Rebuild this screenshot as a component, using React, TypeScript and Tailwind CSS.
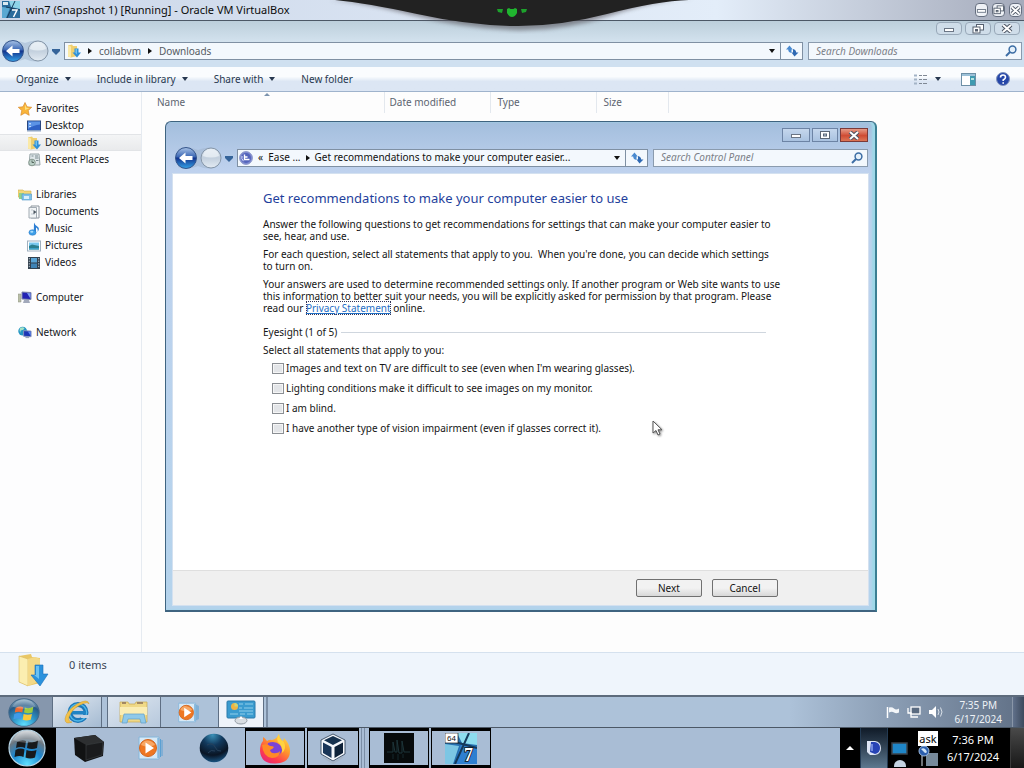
import React, { useState } from "react";

type IconProps = { className?: string };

const GUEST = "font-['Noto_Sans','Open_Sans',sans-serif]";

/* ---------- small glyphs ---------- */

function Caret({ className = "" }: IconProps) {
  return (
    <svg viewBox="0 0 6 4" className={`h-1 w-1.5 shrink-0 ${className}`} aria-hidden="true">
      <path d="M0 0h6L3 4z" fill="currentColor" />
    </svg>
  );
}

function RightArrow() {
  return (
    <svg viewBox="0 0 4 6" className="h-1.5 w-1 shrink-0" aria-hidden="true">
      <path d="M0 0l4 3-4 3z" fill="#111" />
    </svg>
  );
}

function NavIcons({ id }: { id: string }) {
  return (
    <svg viewBox="0 0 60 24" className="h-6 w-[60px] shrink-0" aria-hidden="true">
      <defs>
        <linearGradient id={`${id}-b`} x1="0" y1="0" x2="0" y2="1">
          <stop offset="0" stopColor="#a9c3e6" />
          <stop offset=".45" stopColor="#3a66b4" />
          <stop offset=".5" stopColor="#12328c" />
          <stop offset="1" stopColor="#35a3e8" />
        </linearGradient>
        <linearGradient id={`${id}-g`} x1="0" y1="0" x2="0" y2="1">
          <stop offset="0" stopColor="#dfe8f1" />
          <stop offset=".5" stopColor="#c3d0de" />
          <stop offset="1" stopColor="#e3ebf3" />
        </linearGradient>
      </defs>
      <path d="M4 3Q12-1 24 4Q36-1 44 4L44 20Q36 25 24 20Q12 25 4 21z" fill="#9fb4cc" opacity=".5" />
      <circle cx="12" cy="12" r="10.5" fill={`url(#${id}-b)`} stroke="#34558c" />
      <path d="M5 12l6.500-5.500v3.500h7v4h-7v3.500z" fill="#fff" />
      <circle cx="37" cy="12" r="10" fill={`url(#${id}-g)`} stroke="#8596a8" />
      <path d="M29 10a8 7 0 0 1 16 0q-8 3-16 0z" fill="#eef3f8" opacity=".7" />
      <path d="M51 10h8v2l-4 4-4-4z" fill="#35649a" />
    </svg>
  );
}

function RefreshIcon() {
  return (
    <svg viewBox="0 0 14 12" className="h-3 w-3.5" aria-hidden="true">
      <path d="M4.500 .5L1 4.500h2.200q0 3 3.300 3.500V4.500h1.300z" fill="#4a8ad0" />
      <path d="M9.500 11.500L13.500 7.500h-2.300Q11 4.500 8 4v3.500H6.500z" fill="#2f69b3" />
    </svg>
  );
}

function SearchIcon() {
  return (
    <svg viewBox="0 0 12 12" className="size-3 shrink-0" aria-hidden="true">
      <circle cx="7.500" cy="4.500" r="3.400" fill="#e4f0fa" stroke="#3d6ea5" strokeWidth="1.500" />
      <path d="M5 7L1 11" stroke="#3d6ea5" strokeWidth="2" />
    </svg>
  );
}

function MinGlyph() {
  return (
    <svg viewBox="0 0 12 8" className="h-2 w-3" aria-hidden="true">
      <rect x="1.500" y="3.500" width="9" height="3" fill="#fff" stroke="#6b7685" />
    </svg>
  );
}

function RestoreGlyph() {
  return (
    <svg viewBox="0 0 12 10" className="h-2.5 w-3" aria-hidden="true">
      <rect x="4.500" y=".5" width="7" height="5.500" fill="#fff" stroke="#56606f" />
      <rect x="1" y="3" width="7" height="6" fill="#fff" stroke="#56606f" />
      <rect x="3.500" y="5.500" width="2" height="1.500" fill="none" stroke="#56606f" />
    </svg>
  );
}

function MaxGlyph() {
  return (
    <svg viewBox="0 0 12 8" className="h-2 w-3" aria-hidden="true">
      <rect x="1.500" y=".5" width="9" height="7" fill="#fff" stroke="#5b6675" />
      <rect x="4.500" y="3" width="3" height="2" fill="#b9cbe2" stroke="#5b6675" />
    </svg>
  );
}

function CloseGlyph() {
  return (
    <svg viewBox="0 0 12 9" className="h-[9px] w-3" aria-hidden="true">
      <path d="M2 1l8 7M10 1L2 8" stroke="#4c5563" strokeWidth="4" />
      <path d="M2 1l8 7M10 1L2 8" stroke="#fff" strokeWidth="2" />
    </svg>
  );
}

/* ---------- navigation tree icons ---------- */

function StarIcon() {
  return (
    <svg viewBox="0 0 14 14" className="size-3.5" aria-hidden="true">
      <path d="M7 .5l2 4.300 4.700.5-3.500 3.200 1 4.800L7 10.900l-4.200 2.400 1-4.800L.3 5.300 5 4.800z" fill="#f9b53a" stroke="#d98a2b" strokeWidth=".7" />
      <path d="M7 2.500l1.400 3.200L12 6 7 8z" fill="#ffe07a" />
    </svg>
  );
}

function DesktopIcon() {
  return (
    <svg viewBox="0 0 14 12" className="h-3 w-3.5" aria-hidden="true">
      <rect x=".5" y="1" width="13" height="9.500" fill="#2f62c6" stroke="#28467f" />
      <path d="M1 1.500h12v3Q6 5 1 9z" fill="#5b93e6" />
      <path d="M2 3h2v1.500H2zM2 6h2v1H2z" fill="#b9d7ff" />
      <path d="M0 10h14v1.500H0z" fill="#8fa5c4" />
    </svg>
  );
}

function DownloadsIcon() {
  return (
    <svg viewBox="0 0 14 14" className="size-3.5 shrink-0" aria-hidden="true">
      <path d="M1 1.500l4-1 1 1.500h4v10l-6 1.500-3-1z" fill="#f0cf6e" />
      <path d="M1 1.500l3 1v11l-3-1z" fill="#fae9a7" />
      <path d="M7.500 4.500h4v4H14l-4 5-4.500-5h2z" fill="#2e8fd6" />
      <path d="M8.500 5h1.500v5.500l-2-2h.5z" fill="#6fc0ee" />
    </svg>
  );
}

function RecentIcon() {
  return (
    <svg viewBox="0 0 14 14" className="size-3.5" aria-hidden="true">
      <path d="M3 1h9l1 11H2z" fill="#dfe7ea" stroke="#98a5a8" />
      <path d="M8 3h3M8 5h3.500M4.500 3h2M9 7.500h2.500" stroke="#7b8b90" />
      <circle cx="5" cy="9.500" r="3.300" fill="#b9cfc6" stroke="#87988f" />
      <path d="M5 7.500v2h2" stroke="#56675f" fill="none" />
    </svg>
  );
}

function LibrariesIcon() {
  return (
    <svg viewBox="0 0 14 12" className="h-3 w-3.5" aria-hidden="true">
      <path d="M0 1h5l1 1h7v6H0z" fill="#f3d778" stroke="#cfae51" strokeWidth=".6" />
      <path d="M1 4h5v6H1z" fill="#8fd08c" />
      <path d="M4 5h9.500v6H4z" fill="#7fc2ea" stroke="#5398c7" strokeWidth=".6" />
      <path d="M6 7h5v3H6z" fill="#d8effb" />
    </svg>
  );
}

function DocumentsIcon() {
  return (
    <svg viewBox="0 0 14 14" className="size-3.5" aria-hidden="true">
      <path d="M4 1h8v12H4z" fill="#fbfcfd" stroke="#8b949d" />
      <path d="M2 2.500h7.500v10.500H2z" fill="#f1f4f6" stroke="#a2abb3" />
      <path d="M4 5h2M4 9h4" stroke="#c0c8cf" />
      <path d="M6.500 5l3 2-3 2.200z" fill="#4a5560" />
    </svg>
  );
}

function MusicIcon() {
  return (
    <svg viewBox="0 0 14 14" className="size-3.5" aria-hidden="true">
      <path d="M7 .5q1 3 4 4.500 2 2-.5 5 1-3-1.500-4.500v4.500H6.800z" fill="#2d7fd4" />
      <ellipse cx="5.500" cy="10.500" rx="3.600" ry="2.800" fill="#3f9fe8" stroke="#2373c0" strokeWidth=".5" />
      <ellipse cx="4.800" cy="9.800" rx="1.600" ry="1" fill="#a9dcfb" />
    </svg>
  );
}

function PicturesIcon() {
  return (
    <svg viewBox="0 0 14 12" className="h-3 w-3.5" aria-hidden="true">
      <rect x=".5" y="1" width="13" height="10" fill="#fff" stroke="#9fb0bf" />
      <path d="M2 2.500h10v4H2z" fill="#79c7ee" />
      <path d="M2 6l3-1.500 7 1.500v3.500H2z" fill="#2b7e8e" />
      <path d="M2 8h10v1.500H2z" fill="#3aa0c8" />
    </svg>
  );
}

function VideosIcon() {
  return (
    <svg viewBox="0 0 14 14" className="size-3.5" aria-hidden="true">
      <rect x="1" y="1" width="12" height="12" fill="#33414e" />
      <path d="M4 2h6v4.500H4z" fill="#5aa5d6" />
      <path d="M4 7.500h6V12H4z" fill="#3f83b5" />
      <path d="M2.300 2v10M11.700 2v10" stroke="#b5c3cf" strokeDasharray="1.300 1.300" />
    </svg>
  );
}

function ComputerIcon() {
  return (
    <svg viewBox="0 0 14 13" className="h-[13px] w-3.5" aria-hidden="true">
      <path d="M0 3h3v8H0z" fill="#b9bfa8" stroke="#8d9381" strokeWidth=".5" />
      <path d="M4 1l9 .5v7L4 8z" fill="#2222b4" stroke="#7c86a8" />
      <path d="M9 2l3.500.2v5.500z" fill="#7e9df0" />
      <path d="M6 9h5l1 3H5z" fill="#a2a9bb" />
    </svg>
  );
}

function NetworkIcon() {
  return (
    <svg viewBox="0 0 15 13" className="h-[13px] w-3.5" aria-hidden="true">
      <circle cx="5" cy="5" r="4.700" fill="#2596c4" />
      <path d="M2 2q3-2 5 0-1 2-3 2T3 7Q1 5 2 2z" fill="#a7e3c5" />
      <path d="M6 4.500l8 .5v6l-8-.5z" fill="#1c35b5" stroke="#8896bd" />
      <path d="M10.500 5.500l3 .3v4.200z" fill="#5f8af0" />
      <path d="M8 11h4v1.500H8z" fill="#9aa5b8" />
    </svg>
  );
}

function EaseIcon() {
  return (
    <svg viewBox="0 0 14 14" className="size-3.5 shrink-0" aria-hidden="true">
      <circle cx="7" cy="7" r="6.400" fill="#7c88cf" stroke="#8c97c9" />
      <circle cx="7" cy="7" r="5" fill="#5464bb" />
      <path d="M5.500 3.500v5h5M5.500 6h3" stroke="#fff" strokeWidth="1.400" fill="none" />
      <path d="M3 5q-1 3 1.500 5.200" stroke="#dfe4ff" fill="none" />
    </svg>
  );
}

/* ---------- task bar icons ---------- */

function OrbIcon({ dark = false, id, className }: { dark?: boolean; id: string; className: string }) {
  return (
    <svg viewBox="0 0 38 38" preserveAspectRatio="none" className={className} aria-hidden="true">
      <defs>
        <radialGradient id={id} cx=".5" cy=".95" r=".95">
          <stop offset="0" stopColor="#5fe0ff" />
          <stop offset=".45" stopColor={dark ? "#1c86cf" : "#2a8cc0"} />
          <stop offset=".75" stopColor={dark ? "#6b7680" : "#285a85"} />
          <stop offset="1" stopColor={dark ? "#d5dade" : "#9ab8cc"} />
        </radialGradient>
      </defs>
      <circle cx="19" cy="19" r="18" fill={`url(#${id})`} stroke={dark ? "#b7d5e6" : "#44698a"} strokeWidth="1.200" />
      <path d="M9 13q5-3 9-1l-1 7q-4-2-9 0z" fill={dark ? "#17191c" : "#ec6a32"} />
      <path d="M20 12.500q5 2 10-1l-1 7.500q-5 2-10 0z" fill={dark ? "#17191c" : "#9ccb3e"} />
      <path d="M7.500 21q5-2.500 9-.5l-1 7.500q-4-2-9 0z" fill={dark ? "#17191c" : "#3f9be8"} />
      <path d="M18.500 21q5 2 10 0l-1.500 7.500q-5 2-9.500 0z" fill={dark ? "#17191c" : "#f8c93a"} />
      <path d="M5 11Q10 2 19 2t14 9Q19 17 5 11z" fill="#fff" opacity=".25" />
    </svg>
  );
}

function IeIcon() {
  return (
    <svg viewBox="0 0 28 26" className="h-[26px] w-7" aria-hidden="true">
      <circle cx="15" cy="13.500" r="8" fill="none" stroke="#1c77b8" strokeWidth="5" />
      <circle cx="15" cy="13.500" r="8.500" fill="none" stroke="#4db7e8" strokeWidth="1.500" />
      <path d="M9 12h14v3.500H9z" fill="#1f83c4" />
      <path d="M18 16h8v3h-8z" fill="#c4d3e4" />
      <path d="M26 5Q25-1 14 5 3 12 2 20q0 6 7 3-4 0-3-5Q9 10 17 6q8-4 9-1z" fill="#f2c14a" stroke="#cf9a2b" strokeWidth=".5" />
    </svg>
  );
}

function FolderStackIcon() {
  return (
    <svg viewBox="0 0 30 26" className="h-[26px] w-[30px]" aria-hidden="true">
      <path d="M1 3h8l1 2h6l1-2h11v20H1z" fill="#f0d987" stroke="#c8a951" strokeWidth=".7" />
      <path d="M3 4h4M18 4h6" stroke="#8a6f5a" strokeWidth="1.500" />
      <path d="M1 8h27v8H1z" fill="#faedb4" />
      <path d="M5 15h20l2 9h-5l-1-4H9l-1 4H3z" fill="#8fc9ea" stroke="#5e9fc8" strokeWidth=".7" />
    </svg>
  );
}

function MediaIcon({ className }: { className: string }) {
  return (
    <svg viewBox="0 0 26 24" className={className} aria-hidden="true">
      <path d="M2 1h20v22H2z" fill="#d7e9f6" stroke="#84b6da" />
      <path d="M21 2v20M23.500 3v18M25 4v16" stroke="#5ba0d3" strokeWidth="1" />
      <circle cx="11" cy="12" r="8.500" fill="#ee7722" stroke="#d2641d" />
      <path d="M4 9Q6 4 11 4.500T18 9Q11 12 4 9z" fill="#f7a765" />
      <path d="M8.500 6.500L17 12l-8.500 5.500z" fill="#fff" />
    </svg>
  );
}

function ControlPanelIcon() {
  return (
    <svg viewBox="0 0 30 26" className="h-[26px] w-[30px]" aria-hidden="true">
      <rect x="1" y="2" width="28" height="17" rx="1" fill="#3a9bcf" stroke="#2a7bab" />
      <path d="M13 5h4M19 5h8M13 9h3M18 9h9M4 15h8M14 15h5M21 15h6M13 12h14" stroke="#8fcfec" strokeWidth="1.200" />
      <circle cx="8.500" cy="7.500" r="3.500" fill="#f0b441" />
      <path d="M8.500 7.500V4a3.500 3.500 0 0 1 3.500 3.500z" fill="#c9d77a" />
      <ellipse cx="15" cy="21.500" rx="6" ry="3.500" fill="#d9dee3" stroke="#929ba4" />
      <path d="M13 20l2-3 2 3z" fill="#fff" />
    </svg>
  );
}

function BlackBoxIcon() {
  return (
    <svg viewBox="0 0 32 28" className="h-7 w-8" aria-hidden="true">
      <path d="M1 4L22 1l9 7-1 14-18 6L2 21z" fill="#111213" />
      <path d="M1 4L22 1l9 7-18 3z" fill="#2d2f31" />
      <path d="M13 11l17-3-1 13-16 5z" fill="#1a1b1d" stroke="#3a3d40" strokeWidth=".7" />
    </svg>
  );
}

function SphereIcon() {
  return (
    <svg viewBox="0 0 30 30" className="size-[30px]" aria-hidden="true">
      <defs>
        <radialGradient id="sphere" cx=".45" cy=".05" r="1">
          <stop offset="0" stopColor="#3b91b8" />
          <stop offset=".35" stopColor="#123a5e" />
          <stop offset=".7" stopColor="#0a1524" />
          <stop offset="1" stopColor="#1c5f93" />
        </radialGradient>
      </defs>
      <circle cx="15" cy="15" r="14.300" fill="url(#sphere)" />
      <path d="M8 12q6-3 8 2t6 4M9 20q3-4 7-2" stroke="#27405a" fill="none" />
    </svg>
  );
}

function FirefoxIcon() {
  return (
    <svg viewBox="0 0 32 31" className="h-[31px] w-8" aria-hidden="true">
      <defs>
        <linearGradient id="fox" x1=".9" y1="0" x2=".2" y2="1">
          <stop offset="0" stopColor="#ffe14a" />
          <stop offset=".4" stopColor="#ff9a2b" />
          <stop offset=".75" stopColor="#ff3d4d" />
          <stop offset="1" stopColor="#e52477" />
        </linearGradient>
      </defs>
      <path d="M20 1q0 4 4 7 1-2 1-3 6 6 6 13 0 12-14.500 12.500T1 18Q1 11 4 8V4q2 1 4 4 3-2 5-1 5-1 7-6z" fill="url(#fox)" />
      <path d="M9 10q7-3 12 2 4 5 0 9t-9 1-4-6z" fill="#7a44d6" />
      <path d="M3 12q5-2 8 1 3 0 4 1-1 2-4 3 1 4 6 3 3 0 4-2 0 7-8 7Q4 24 3 12z" fill="#ff8a26" />
      <path d="M20 1q-3 4-1 8 5 4 4 11 5-4 2-11-5-3-5-8z" fill="#ffd33f" />
    </svg>
  );
}

function VirtualBoxIcon() {
  return (
    <svg viewBox="0 0 28 31" className="h-[31px] w-7" aria-hidden="true">
      <path d="M14 1l12 6v14l-12 7-12-7V7z" fill="#f4f7fb" stroke="#24374e" strokeWidth=".8" />
      <path d="M14 3l9 4.300-9 4.700-9-4.700z" fill="#16324f" />
      <path d="M4 9.500l8.500 4.500v11L4 20z" fill="#1a3658" />
      <path d="M24 9.500L15.500 14v11l8.500-5z" fill="#0e2238" />
      <path d="M4 24l10 6 10-6" stroke="#a5b5c7" strokeWidth="2" fill="none" />
    </svg>
  );
}

function MonitorTraceIcon() {
  return (
    <svg viewBox="0 0 30 30" className="size-[30px]" aria-hidden="true">
      <path d="M0 0h30v30H0z" fill="#070b0c" />
      <path d="M3 19h6V9l2 10h2V7l2 13h3V8l2 11h6" stroke="#1d3439" fill="none" />
      <path d="M9 21v5M14 21v6M19 21v4" stroke="#15292c" />
    </svg>
  );
}

function Seven64Icon() {
  return (
    <svg viewBox="0 0 32 31" className="h-[31px] w-8" role="img" aria-label="Windows 7 64-bit machine">
      <path d="M0 0h32v31H0z" fill="#256fb0" />
      <path d="M12 0h20v12L17 10z" fill="#8ddcee" />
      <path d="M0 11l14 2-6 18H0z" fill="#7cc6e4" />
      <path d="M16 11l16 4v16H10z" fill="#2e7fd0" />
      <path d="M24 0L10 31M10 9l22 6" stroke="#153a5b" strokeWidth="2" />
      <path d="M0 0h13v10H0z" fill="#fff" stroke="#222" strokeWidth=".7" />
      <text x="2" y="8" fontSize="8" fill="#111" className="font-['Liberation_Sans',sans-serif]">64</text>
      <text x="19" y="28" fontSize="18" fontWeight="700" fill="#fff" stroke="#111" strokeWidth="1.600" paintOrder="stroke" className="font-['Liberation_Serif',serif]">7</text>
    </svg>
  );
}

function MachineIcon() {
  return (
    <svg viewBox="0 0 18 18" className="size-[18px] shrink-0" aria-hidden="true">
      <path d="M0 0h18v17H0z" fill="#2b6c9c" />
      <path d="M7 0h11v8L9 6z" fill="#8dd3e8" />
      <path d="M0 6l8 1-4 10H0z" fill="#5aa8d2" />
      <path d="M1 1h5v3H1z" fill="#dbe8f0" />
      <path d="M13 0L5 17M4 6l14 3" stroke="#173c5c" />
      <path d="M10 9h5l-3.500 7" stroke="#fff" strokeWidth="1.500" fill="none" />
    </svg>
  );
}

function FolderLargeIcon() {
  return (
    <svg viewBox="0 0 32 34" className="h-[34px] w-8 shrink-0" aria-hidden="true">
      <path d="M2 3l12-2 1 3 8 1v25l-12 3-9-4z" fill="#e9c766" />
      <path d="M2 3l9 3v27l-9-4z" fill="#fbeeb0" stroke="#d9bb62" strokeWidth=".6" />
      <path d="M11 6l7-2 5 2v22l-12 5z" fill="#f3d988" />
      <path d="M18 12h8v9h5l-8 12-9-11h4z" fill="#2b92dd" stroke="#1b70b8" strokeWidth=".6" />
      <path d="M19 13h3v13l-5-4h2z" fill="#6bc1f2" />
    </svg>
  );
}

/* ---------- shared pieces ---------- */

function AddressBar({ children, label, trail }: { children: React.ReactNode; label: string; trail: string }) {
  return (
    <div className="flex h-[18px] min-w-0 flex-1 border border-[#7f90a3] bg-[#f3f8fd]">
      <div className={`flex min-w-0 flex-1 items-center overflow-hidden whitespace-nowrap ${trail}`}>{children}</div>
      <button aria-label="Previous locations" className="flex w-4 items-center justify-center">
        <Caret className="text-[#111]" />
      </button>
      <button aria-label={label} className="flex w-[22px] items-center justify-center border-l border-[#7f90a3]">
        <RefreshIcon />
      </button>
    </div>
  );
}

function SearchBox({ placeholder, className }: { placeholder: string; className: string }) {
  return (
    <label className={`flex h-[18px] items-center border border-[#8a9bae] bg-[#f3f8fd] pr-1 pl-[7px] ${className}`}>
      <input
        aria-label={placeholder}
        placeholder={placeholder}
        className="min-w-0 flex-1 bg-transparent text-[10px] italic outline-none placeholder:text-[#7b8088]"
      />
      <SearchIcon />
    </label>
  );
}

const TREE = [
  {
    name: "Favorites",
    icon: <StarIcon />,
    items: [
      { name: "Desktop", icon: <DesktopIcon /> },
      { name: "Downloads", icon: <DownloadsIcon /> },
      { name: "Recent Places", icon: <RecentIcon /> },
    ],
  },
  {
    name: "Libraries",
    icon: <LibrariesIcon />,
    items: [
      { name: "Documents", icon: <DocumentsIcon /> },
      { name: "Music", icon: <MusicIcon /> },
      { name: "Pictures", icon: <PicturesIcon /> },
      { name: "Videos", icon: <VideosIcon /> },
    ],
  },
  { name: "Computer", icon: <ComputerIcon />, items: [] },
  { name: "Network", icon: <NetworkIcon />, items: [] },
];

const STATEMENTS = [
  "Images and text on TV are difficult to see (even when I'm wearing glasses).",
  "Lighting conditions make it difficult to see images on my monitor.",
  "I am blind.",
  "I have another type of vision impairment (even if glasses correct it).",
];

function HostTitleBar() {
  return (
    <header className="relative flex h-[21px] items-center gap-1.5 border-b border-[#4c5866] bg-linear-to-r from-[#cbd6e8] via-[#e3edf9] via-70% to-[#a5abbb] pr-0.5 pl-0.5">
      <MachineIcon />
      <h1 className="flex-1 text-[11px] whitespace-nowrap text-[#0b0b0b]">win7 (Snapshot 1) [Running] - Oracle VM VirtualBox</h1>
      <div className="flex gap-1">
        <button aria-label="Minimize machine window" className="flex h-3.5 w-[13px] items-center justify-center rounded-sm border border-[#666f80] bg-[#eef1f6]"><MinGlyph /></button>
        <button aria-label="Restore machine window" className="flex h-3.5 w-[13px] items-center justify-center rounded-sm border border-[#666f80] bg-[#eef1f6]"><RestoreGlyph /></button>
        <button aria-label="Close machine window" className="flex h-3.5 w-[13px] items-center justify-center rounded-sm border border-[#666f80] bg-[#eef1f6]"><CloseGlyph /></button>
      </div>
      <svg viewBox="0 0 380 34" className="pointer-events-none absolute top-0 left-1/2 z-20 h-[34px] w-[380px] -translate-x-1/2" aria-hidden="true">
        <defs>
          <filter id="tab-shadow"><feGaussianBlur stdDeviation="2" /></filter>
        </defs>
        <path d="M8 0Q40 2 90 15T190 30T290 15T372 0z" fill="#57525a" opacity=".6" filter="url(#tab-shadow)" />
        <path d="M13 0Q45 3 95 14T190 26T285 14T367 0z" fill="#222222" />
        <path d="M175 9l6 0-1 4-4-1zM205 9l-6 0 1 4 4-1z" fill="#1da12c" />
        <path d="M185 9l2-1 1.500 1h3l1.500-1 2 1v4q-2 4-5 4t-5-4z" fill="#20b52f" />
      </svg>
    </header>
  );
}

function ExplorerChrome() {
  return (
    <>
      <div className="flex h-[21px] justify-end gap-[3px] bg-linear-to-b from-[#bccfdb] to-[#d3e2ee] px-1 pt-px">
        <button aria-label="Minimize" className="flex h-[13px] w-[26px] items-center justify-center rounded-sm border border-[#98a8b8] bg-[#cfdde9]"><MinGlyph /></button>
        <button aria-label="Restore" className="flex h-[13px] w-[26px] items-center justify-center rounded-sm border border-[#98a8b8] bg-[#cfdde9]"><RestoreGlyph /></button>
        <button aria-label="Close" className="flex h-[13px] w-[26px] items-center justify-center rounded-sm border border-[#98a8b8] bg-[#cfdde9]"><CloseGlyph /></button>
      </div>
      <div className="flex h-[25px] items-center gap-[5px] bg-[#cfe0f0] pr-0.5 pb-[7px] pl-px">
        <div className="-mr-0.5"><NavIcons id="explorer" /></div>
        <AddressBar label="Refresh Downloads" trail="gap-[7px] pl-0.5">
          <DownloadsIcon />
          <RightArrow />
          <span className="text-[10px] text-[#555b63]">collabvm</span>
          <RightArrow />
          <span className="text-[10px] text-[#555b63]">Downloads</span>
        </AddressBar>
        <SearchBox placeholder="Search Downloads" className="w-[214px]" />
      </div>
      <div className="flex h-[25px] items-center border-b border-[#9fb3cc] bg-linear-to-b from-[#fafcfe] from-40% to-[#dce6f4] to-60% pr-3.5 pl-4 text-[10px] text-[#28384f]">
        <div className="flex flex-1 items-center gap-[26px]">
          <button className="flex items-center gap-1.5">Organize <Caret /></button>
          <button className="flex items-center gap-1.5">Include in library <Caret /></button>
          <button className="flex items-center gap-1.5">Share with <Caret /></button>
          <button>New folder</button>
        </div>
        <div className="flex items-center gap-5">
          <button aria-label="Change your view" className="flex items-center gap-2">
            <svg viewBox="0 0 14 11" className="h-[11px] w-3.5" aria-hidden="true">
              <path d="M1 1.500h3M1 5.500h3M1 9.500h3" stroke="#a3b3c6" strokeWidth="2" />
              <path d="M6 1.500h3M10 1.500h4M6 5.500h3M10 5.500h4M6 9.500h3M10 9.500h4" stroke="#7f8894" />
            </svg>
            <Caret />
          </button>
          <button aria-label="Preview pane">
            <svg viewBox="0 0 15 13" className="h-[13px] w-[15px]" aria-hidden="true">
              <rect x=".5" y=".5" width="14" height="12" fill="#fff" stroke="#6d8fa6" />
              <path d="M1 1h13v2H1z" fill="#9cc1d8" />
              <path d="M9 3h5v9H9z" fill="#3f9ab0" />
              <path d="M10 5h3v2h-3z" fill="#b7e3e0" />
            </svg>
          </button>
          <button aria-label="Help">
            <svg viewBox="0 0 14 14" className="size-3.5" aria-hidden="true">
              <circle cx="7" cy="7" r="6.500" fill="#2546a8" stroke="#8193bd" />
              <path d="M4.500 5.500Q4.500 3 7 3t2.500 2.200Q9.500 6.500 7.200 8v1M7.200 10.300v1.500" stroke="#fff" strokeWidth="1.600" fill="none" />
            </svg>
          </button>
        </div>
      </div>
    </>
  );
}

function NavigationTree() {
  return (
    <nav aria-label="Folders" className="flex w-[142px] shrink-0 flex-col gap-[18px] border-r border-[#e6ebf1] bg-[#fdfdfe] pt-2 text-[10px] text-[#15181c]">
      {TREE.map((group) => (
        <div key={group.name}>
          <button className="flex h-[17px] w-full items-center gap-1 pl-[18px]">
            {group.icon}
            {group.name}
          </button>
          {group.items.map((item) => (
            <button
              key={item.name}
              className={
                item.name === "Downloads"
                  ? "flex h-[17px] w-full items-center gap-1 border-y border-[#e2e4e7] bg-linear-to-b from-[#f4f5f6] to-[#e9eaec] pl-[27px]"
                  : "flex h-[17px] w-full items-center gap-1 pl-[27px]"
              }
            >
              {item.icon}
              {item.name}
            </button>
          ))}
        </div>
      ))}
    </nav>
  );
}

function EaseDialog() {
  const [checked, setChecked] = useState<boolean[]>([false, false, false, false]);
  return (
    <section
      role="dialog"
      aria-label="Ease of Access"
      className="absolute top-[29px] left-[165px] w-[712px] rounded-t-md border border-r-2 border-b-2 border-[#3f6480] border-r-[#3b7f93] bg-linear-to-b from-[#a3bedd] via-[#bfd2ee] via-10% to-[#b4d3ec] px-1.5 pb-1 shadow-[inset_-3px_0_2px_#9ed8e8]"
    >
      <div className="flex h-[25px] justify-end gap-0.5 pt-1.5 pr-px">
        <button aria-label="Minimize dialog" className="flex h-3.5 w-7 items-center justify-center border border-[#6d84a5] bg-linear-to-b from-[#c5d7ed] to-[#a9c2e0]"><MinGlyph /></button>
        <button aria-label="Maximize dialog" className="flex h-3.5 w-[26px] items-center justify-center border border-[#6d84a5] bg-linear-to-b from-[#c5d7ed] to-[#a9c2e0]"><MaxGlyph /></button>
        <button aria-label="Close dialog" className="flex h-3.5 w-7 items-center justify-center border border-[#7b3a3a] bg-linear-to-b from-[#e59a87] via-[#cf4b33] via-55% to-[#dc7557]"><CloseGlyph /></button>
      </div>
      <div className="flex h-[26px] items-center gap-[3px] pr-px pb-[5px] pl-0.5">
        <NavIcons id="dialog" />
        <AddressBar label="Refresh control panel" trail="gap-[5px] pl-px">
          <EaseIcon />
          <span className="text-[10px] text-[#111]">«&nbsp; Ease ...</span>
          <RightArrow />
          <span className="text-[10px] text-[#111]">Get recommendations to make your computer easier...</span>
        </AddressBar>
        <SearchBox placeholder="Search Control Panel" className="ml-0.5 w-[215px]" />
      </div>
      <div className="border border-[#d4e1f0] bg-white text-[10px] leading-3 text-[#151515]">
        <div className="pt-4 pr-[90px] pb-[136px] pl-[90px]">
          <h2 className="text-[13px] leading-4 text-[#1f3f9c]">Get recommendations to make your computer easier to use</h2>
          <div className="mt-3 flex flex-col gap-1.5 whitespace-nowrap">
            <p>
              Answer the following questions to get recommendations for settings that can make your computer easier to
              <br />
              see, hear, and use.
            </p>
            <p>
              For each question, select all statements that apply to you.&nbsp; When you're done, you can decide which settings
              <br />
              to turn on.
            </p>
            <p>
              Your answers are used to determine recommended settings only. If another program or Web site wants to use
              <br />
              this information to better suit your needs, you will be explicitly asked for permission by that program. Please
              <br />
              read our{" "}
              <a href="#privacy" className="text-[#1f6fc6] underline outline-1 -outline-offset-1 outline-[#335] outline-dotted">Privacy Statement</a> online.
            </p>
          </div>
          <fieldset>
            <legend className="flex w-full items-center gap-1 pt-3">
              Eyesight (1 of 5)
              <span className="mr-3 h-px flex-1 bg-[#cfd6de]" />
            </legend>
            <p className="mt-1.5">Select all statements that apply to you:</p>
            <div className="mt-1.5 flex flex-col gap-2 pl-[9px]">
              {STATEMENTS.map((text, i) => (
                <label key={text} className="flex items-center gap-0.5">
                  <input
                    type="checkbox"
                    checked={checked[i]}
                    onChange={() => setChecked(checked.map((c, j) => (j === i ? !c : c)))}
                    className="h-[11px] w-3 appearance-none border border-[#8b8f94] bg-[#e3e5e8] shadow-[inset_0_0_0_1px_#f6f6f6] checked:bg-[#3d6ea5]"
                  />
                  {text}
                </label>
              ))}
            </div>
          </fieldset>
        </div>
        <footer className="flex justify-end gap-2.5 border-t border-[#dfdfdf] bg-[#f0f0f0] pt-2 pr-[90px] pb-2">
          <button className="h-[18px] w-[66px] rounded-xs border border-[#707070] bg-linear-to-b from-[#f2f2f2] from-50% to-[#d8d8d8]">Next</button>
          <button className="h-[18px] w-[66px] rounded-xs border border-[#707070] bg-linear-to-b from-[#f2f2f2] from-50% to-[#d8d8d8]">Cancel</button>
        </footer>
      </div>
    </section>
  );
}

function GuestTaskbar() {
  return (
    <div className="flex h-[33px] items-stretch border-t-2 border-b border-t-[#5d6b7c] border-b-[#4c5866] bg-[#adc2d9]">
      <button aria-label="Guest Start" className="flex w-[52px] items-center justify-center bg-[#8697ad] pr-1"><OrbIcon id="orb-guest" className="h-[29px] w-8" /></button>
      <button aria-label="Internet Explorer" className="flex w-[50px] items-center justify-center border-x border-[#5e6f84] bg-linear-to-br from-[#e2e9f2] to-[#a5bbd2]"><IeIcon /></button>
      <button aria-label="Windows Explorer" className="ml-[5px] flex w-[54px] items-center justify-center border-x border-[#5e6f84] bg-linear-to-br from-[#dfe7f0] to-[#b7c9dd]"><FolderStackIcon /></button>
      <button aria-label="Guest Media Player" className="flex w-[54px] items-center justify-center"><MediaIcon className="h-[21px] w-[22px]" /></button>
      <button aria-label="Control Panel" className="ml-[3px] flex w-[46px] items-center justify-center border-x border-[#5e6f84] bg-[#eef3fa]"><ControlPanelIcon /></button>
      <span className="ml-0.5 w-0.5 border-x border-[#7b8ea6]" />
      <div className="flex flex-1 items-center justify-end gap-[7px] bg-linear-to-r from-[#adc2d9] from-70% to-[#64748a] pr-2.5">
        <svg viewBox="0 0 14 12" className="h-3 w-3.5" aria-hidden="true">
          <path d="M1.500 1v11" stroke="#fff" strokeWidth="1.500" />
          <path d="M3 1.500q3-1 5 1t5 0v4q-3 1.500-5 0T3 6.500z" fill="#f3f6f9" />
        </svg>
        <svg viewBox="0 0 14 12" className="h-3 w-3.5" aria-hidden="true">
          <rect x="4" y="1" width="9" height="7" fill="#596a80" stroke="#fff" strokeWidth="1.300" />
          <path d="M1 2v5h3v4h7" stroke="#fff" strokeWidth="1.300" fill="none" />
        </svg>
        <svg viewBox="0 0 16 14" className="h-3.5 w-4" aria-hidden="true">
          <path d="M1 5h3l4-4v12L4 9H1z" fill="#fff" />
          <path d="M10 4q2 3 0 6M12.500 2.500q3 4.500 0 9" stroke="#d9e0e8" fill="none" />
        </svg>
        <time className="ml-1 text-center text-[10px] leading-[14px] text-[#eef2f6]">7:35 PM<br />6/17/2024</time>
      </div>
      <button aria-label="Show guest desktop" className="w-3 border-l border-[#8996a8] bg-linear-to-r from-[#60708a] to-[#3d4a5d]" />
    </div>
  );
}

function HostTaskbar() {
  return (
    <div className="flex h-10 items-stretch bg-[#a9bdd5]">
      <button aria-label="Host Start" className="flex w-14 items-center justify-center bg-black pr-0.5"><OrbIcon dark id="orb-host" className="size-[38px]" /></button>
      <button aria-label="Storage" className="flex w-[66px] items-center justify-center"><BlackBoxIcon /></button>
      <button aria-label="Media Player" className="flex w-14 items-center justify-center"><MediaIcon className="h-6 w-[26px]" /></button>
      <button aria-label="Globe" className="flex w-[67px] items-center justify-center pl-1"><SphereIcon /></button>
      <button aria-label="Firefox" className="flex w-[60px] items-center justify-center border-x border-t-3 border-b-3 border-black"><FirefoxIcon /></button>
      <button aria-label="VirtualBox Manager" className="ml-0.5 flex w-[52px] items-center justify-center border-x border-t-3 border-b-3 border-black"><VirtualBoxIcon /></button>
      <span className="ml-0.5 w-1 border-x border-[#7b8ea6]" />
      <button aria-label="Task monitor" className="ml-1 flex w-[60px] items-center justify-center border-x border-t-3 border-b-3 border-black"><MonitorTraceIcon /></button>
      <button aria-label="Machine window" className="ml-0.5 flex w-[60px] items-center justify-center border-x border-t-3 border-b-3 border-black"><Seven64Icon /></button>
      <div className="flex-1" />
      <div className="flex items-stretch bg-black">
        <button aria-label="Show hidden icons" className="flex w-5 items-center justify-center">
          <svg viewBox="0 0 8 4" className="h-1 w-2" aria-hidden="true"><path d="M0 4l4-4 4 4z" fill="#fff" /></svg>
        </button>
        <button aria-label="Docking tool" className="flex w-7 items-center justify-center border-x border-[#233a52] bg-linear-to-b from-[#101b28] to-[#5d788f]">
          <svg viewBox="0 0 16 16" className="size-4" aria-hidden="true">
            <path d="M1 1h8q6 1 6 7t-6 7H4L1 12z" fill="#dfe6f5" />
            <path d="M5 2h4q5 1 5 6t-5 6L4 12z" fill="#2743b5" />
            <path d="M6 4v7" stroke="#8aa0ee" strokeWidth="1.500" />
          </svg>
        </button>
        <button aria-label="Display" className="flex w-6 items-center justify-center">
          <svg viewBox="0 0 18 38" className="h-[38px] w-[18px]" aria-hidden="true">
            <rect x="1" y="14" width="15" height="11" fill="#1f86c8" stroke="#3b434b" strokeWidth="1.500" />
            <ellipse cx="9" cy="37" rx="6" ry="6" fill="#c5d3e2" />
          </svg>
        </button>
        <div className="flex w-7 flex-col items-center pt-[3px] pl-1">
          <span className="w-5 bg-white text-center text-[11px] leading-[15px] text-black">ask</span>
          <svg viewBox="0 0 20 20" className="h-5 w-5" aria-hidden="true">
            <path d="M8 7h12v13H8z" fill="#778a9b" />
            <circle cx="6" cy="5" r="5" fill="#2c5fae" stroke="#9dbbe2" />
            <path d="M3 3q3-2 5 1t-1 3z" fill="#cfe4f7" />
            <path d="M4 10v10" stroke="#dce5ee" />
          </svg>
        </div>
        <time className="flex w-[70px] flex-col justify-center pr-1 text-center text-[11px] leading-[17px] text-white">
          <span>7:36 PM</span>
          <span>6/17/2024</span>
        </time>
        <button aria-label="Show desktop" className="w-3.5 border-l border-[#3a3a3a] bg-linear-to-b from-[#4a4a4a] to-[#181818]" />
      </div>
    </div>
  );
}

export default function App() {
  return (
    <div className={`flex min-h-screen flex-col overflow-hidden bg-white ${GUEST}`}>
      <HostTitleBar />
      <ExplorerChrome />
      <main className="relative flex flex-1 bg-[#fdfdfd]">
        <NavigationTree />
        <div className="flex-1">
          <table className="w-[527px] table-fixed text-left text-[10px] text-[#5c6470]">
            <thead>
              <tr className="h-[21px] [&>th]:border-r [&>th]:border-[#e3e8ee] [&>th]:font-normal">
                <th className="relative w-[242px] pl-[15px]">
                  Name
                  <svg viewBox="0 0 6 3" className="absolute top-px left-[122px] h-[3px] w-1.5" aria-hidden="true"><path d="M0 3l3-3 3 3z" fill="#7c93ad" /></svg>
                </th>
                <th className="w-[106px] pl-[5px]">Date modified</th>
                <th className="w-[106px] pl-[7px]">Type</th>
                <th className="pl-[7px]">Size</th>
              </tr>
            </thead>
          </table>
        </div>
        <EaseDialog />
        <svg viewBox="0 0 12 17" className="absolute top-[328px] left-[652px] h-[17px] w-3 drop-shadow-[1px_1px_1px_#888]" aria-hidden="true">
          <path d="M1 1v12l3-2.500 2 4.500 2-1-2-4.200h4z" fill="#fff" stroke="#555" />
        </svg>
      </main>
      <div className="flex h-[43px] items-start border-t border-[#d5e1ee] bg-[#eff5fc] pl-[17px]">
        <FolderLargeIcon />
        <p className="pt-[5px] pl-5 text-[11px] leading-[14px] text-[#3c4654]">0 items</p>
      </div>
      <GuestTaskbar />
      <HostTaskbar />
    </div>
  );
}
